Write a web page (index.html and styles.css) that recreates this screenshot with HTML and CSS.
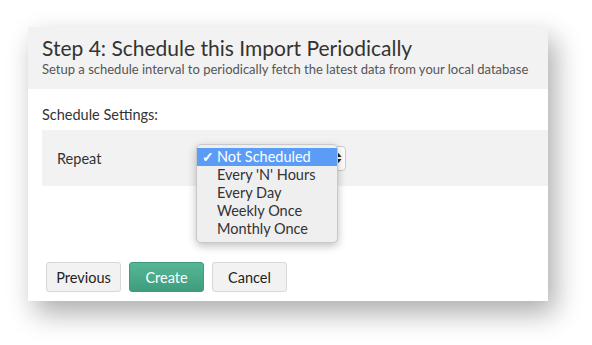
FILE: index.html
```html
<!DOCTYPE html>
<html lang="en">
<head>
  <meta charset="UTF-8" />
  <title>Schedule Import</title>
  <link rel="stylesheet" href="styles.css">
</head>
<body>
  <div class="page">
    <div class="dialog">
      <!-- Header -->
      <div class="header">
        <h2>Step 4: Schedule this Import Periodically</h2>
        <p>Setup a schedule interval to periodically fetch the latest data from your local database</p>
      </div>

      <div class="content">
        <div class="section-title">Schedule Settings:</div>
        <div class="row">
          <label>Repeat</label>
          <div class="select-wrap">
            <div class="select">
              <span class="arrows">
                <svg width="7" height="12" viewBox="0 0 7 12"><path d="M3.5 1 L6.5 5 L0.5 5 Z M3.5 11 L0.5 7 L6.5 7 Z" fill="#222"/></svg>
              </span>
            </div>
            <ul class="menu">
              <li class="selected"><span class="check">✓</span>Not Scheduled</li>
              <li>Every 'N' Hours</li>
              <li>Every Day</li>
              <li>Weekly Once</li>
              <li>Monthly Once</li>
            </ul>
          </div>
        </div>
      </div>

      <div class="footer">
        <button class="btn">Previous</button>
        <button class="btn primary">Create</button>
        <button class="btn">Cancel</button>
      </div>
    </div>
  </div>
</body>
</html>
```

FILE: styles.css
```css
body {
  margin: 0;
  background: #fff;
  font-family: Lato, "Open Sans", sans-serif;
  color: #333;
}

.page {
  padding: 27px 0 44px 28px;
}

.dialog {
  width: 520px;
  height: 274px;
  background: #fff;
  box-shadow: 7px 12px 26px rgba(0, 0, 0, 0.33);
  display: flex;
  flex-direction: column;
}

.header {
  background: #f2f2f2;
  height: 62px;
  box-sizing: border-box;
  padding: 8px 0 0 14px;
}

.header h2 {
  margin: 0;
  font-size: 21px;
  font-weight: normal;
  line-height: 26px;
  color: #333;
}

.header p {
  margin: 0;
  font-size: 13px;
  line-height: 16px;
  color: #555;
}

.content {
  padding: 0 0 0 14px;
}

.section-title {
  font-size: 14.5px;
  line-height: 18px;
  margin: 17px 0 0;
}

.row {
  margin-top: 6px;
  height: 56px;
  background: #f2f2f2;
  display: flex;
  align-items: center;
  padding-left: 15px;
}

.row label {
  font-size: 14.5px;
  width: 139px;
}

.select-wrap {
  position: relative;
}

.select {
  width: 150px;
  height: 25px;
  box-sizing: border-box;
  border: 1px solid #ccc;
  border-radius: 4px;
  background: #fff;
  display: flex;
  justify-content: flex-end;
  align-items: center;
  padding-right: 3px;
}

.arrows {
  display: flex;
}

.menu {
  position: absolute;
  left: 0;
  top: -2px;
  width: 142px;
  margin: 0;
  padding: 3px 0 4px;
  list-style: none;
  background: #efefef;
  border: 1px solid #c8c8c8;
  border-radius: 5px;
  box-shadow: 0 3px 8px rgba(0, 0, 0, 0.25);
  box-sizing: border-box;
  font-size: 14.5px;
}

.menu li {
  height: 18px;
  line-height: 18px;
  padding-left: 20px;
  color: #333;
  position: relative;
}

.menu li.selected {
  background: #5b9cf7;
  color: #fff;
}

.check {
  position: absolute;
  left: 5px;
  font-size: 14px;
  font-weight: bold;
}

.footer {
  margin-top: auto;
  padding: 0 0 9px 18px;
  display: flex;
  gap: 8px;
}

.btn {
  width: 75px;
  height: 30px;
  font-family: Lato, "Open Sans", sans-serif;
  font-size: 14.5px;
  color: #222;
  background: #f2f2f2;
  border: 1px solid #d8d8d8;
  border-radius: 3px;
  cursor: pointer;
}

.btn.primary {
  background: linear-gradient(#55b797, #3f9d7d);
  border-color: #3f9a7b;
  color: #fff;
}
```
